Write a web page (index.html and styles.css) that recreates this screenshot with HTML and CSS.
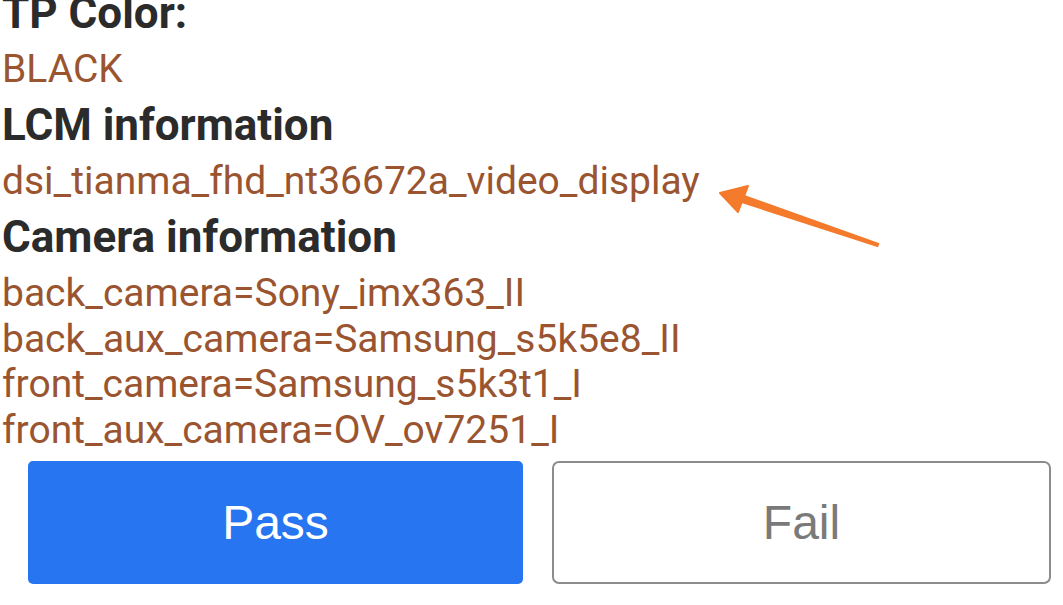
FILE: index.html
```html
<!DOCTYPE html>
<html>
<head>
<meta charset="utf-8">
<link rel="stylesheet" href="styles.css">
</head>
<body>
<div class="page">
  <div class="info">
    <div class="label">TP Color:</div>
    <div class="value">BLACK</div>
    <div class="label">LCM information</div>
    <div class="value">dsi_tianma_fhd_nt36672a_video_display</div>
    <div class="label">Camera information</div>
    <div class="list">
      <div class="item">back_camera=Sony_imx363_II</div>
      <div class="item">back_aux_camera=Samsung_s5k5e8_II</div>
      <div class="item">front_camera=Samsung_s5k3t1_I</div>
      <div class="item">front_aux_camera=OV_ov7251_I</div>
    </div>
  </div>
  <div class="actions">
    <button class="btn btn-pass">Pass</button>
    <button class="btn btn-fail">Fail</button>
  </div>
  <svg class="arrow" width="180" height="70" viewBox="0 0 180 70">
    <path d="M26.1 10.7 L160.5 58.6 L159.5 61.4 L23.9 17.3 Z" fill="#f47a2c" stroke="#f47a2c" stroke-width="1.5" stroke-linejoin="round"/>
    <path d="M2 8 L30 1 L20 27 Z" fill="#f47a2c" stroke="#f47a2c" stroke-width="2" stroke-linejoin="round"/>
  </svg>
</div>
</body>
</html>
```
FILE: styles.css
```css
html, body {
  margin: 0;
  padding: 0;
  background: #ffffff;
}
.page {
  position: relative;
  width: 1063px;
  height: 605px;
  overflow: hidden;
  font-family: Roboto, "Noto Sans", sans-serif;
}
.info {
  padding-left: 2px;
  margin-top: -15px;
}
.label {
  font-size: 44px;
  font-weight: bold;
  color: #2b2b2b;
  line-height: 56px;
}
.value {
  font-size: 39px;
  color: #9a5530;
  line-height: 56px;
}
.list {
  padding-top: 6px;
}
.item {
  font-size: 39px;
  color: #9a5530;
  line-height: 45.5px;
}
.actions {
  display: flex;
  gap: 29px;
  padding: 0 12px 0 28px;
  margin-top: 8px;
}
.btn {
  flex: 1;
  height: 123px;
  font-family: "Liberation Sans", Arial, sans-serif;
  font-size: 48px;
  border-radius: 5px;
  cursor: pointer;
}
.btn-pass {
  background: #2775f0;
  color: #ffffff;
  border: none;
}
.btn-fail {
  background: #ffffff;
  color: #7a7a7a;
  border: 2px solid #8c8c8c;
  border-radius: 7px;
}
.arrow {
  position: absolute;
  left: 718px;
  top: 185px;
}
```
